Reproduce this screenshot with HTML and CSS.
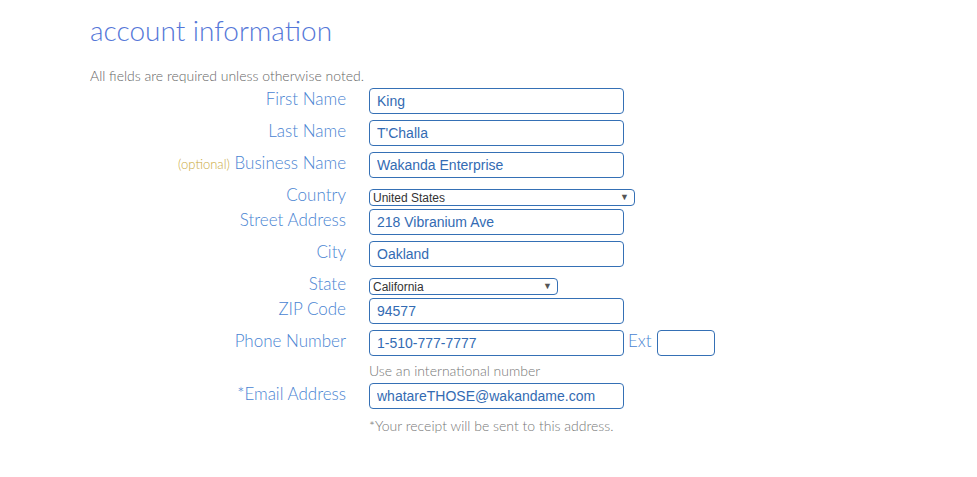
FILE: index.html
```html
<!DOCTYPE html>
<html lang="en">
<head>
<meta charset="utf-8">
<title>account information</title>
<link rel="stylesheet" href="styles.css">
</head>
<body>
<div class="page">
  <h1 class="title">account information</h1>
  <p class="note">All fields are required unless otherwise noted.</p>
  <form class="form">
    <div class="row">
      <label class="label">First Name</label>
      <div class="field"><input class="input" type="text" value="King"></div>
    </div>
    <div class="row">
      <label class="label">Last Name</label>
      <div class="field"><input class="input" type="text" value="T'Challa"></div>
    </div>
    <div class="row">
      <label class="label"><span class="optional">(optional)</span> Business Name</label>
      <div class="field"><input class="input" type="text" value="Wakanda Enterprise"></div>
    </div>
    <div class="row row-select">
      <label class="label">Country</label>
      <div class="field"><div class="select select-country"><span>United States</span><span class="arrow">&#9660;</span></div></div>
    </div>
    <div class="row">
      <label class="label">Street Address</label>
      <div class="field"><input class="input" type="text" value="218 Vibranium Ave"></div>
    </div>
    <div class="row">
      <label class="label">City</label>
      <div class="field"><input class="input" type="text" value="Oakland"></div>
    </div>
    <div class="row row-select">
      <label class="label">State</label>
      <div class="field"><div class="select select-state"><span>California</span><span class="arrow">&#9660;</span></div></div>
    </div>
    <div class="row">
      <label class="label">ZIP Code</label>
      <div class="field"><input class="input" type="text" value="94577"></div>
    </div>
    <div class="row row-phone">
      <label class="label">Phone Number</label>
      <div class="field field-phone">
        <input class="input" type="text" value="1-510-777-7777">
        <span class="ext-label">Ext</span>
        <input class="input input-ext" type="text" value="">
      </div>
    </div>
    <div class="hint-row"><span class="hint">Use an international number</span></div>
    <div class="row">
      <label class="label">*Email Address</label>
      <div class="field"><input class="input" type="text" value="whatareTHOSE@wakandame.com"></div>
    </div>
    <div class="hint-row"><span class="hint">*Your receipt will be sent to this address.</span></div>
  </form>
</div>
</body>
</html>
```

FILE: styles.css
```css
* { box-sizing: border-box; }
html, body { margin: 0; padding: 0; background: #fff; }
body { font-family: "Lato", "Open Sans", sans-serif; }

.page { padding: 12px 0 0 90px; }

.title {
  margin: 0;
  font-family: "Lato", sans-serif;
  font-weight: 300;
  font-size: 28px;
  line-height: 36px;
  color: #5577d8;
}

.note {
  margin: 19px 0 0;
  font-size: 14px;
  line-height: 18px;
  font-weight: 300;
  color: #666;
}

.form {
  display: flex;
  flex-direction: column;
  margin-top: 3px;
}

.row {
  display: grid;
  grid-template-columns: 256px auto;
  column-gap: 23px;
  height: 26px;
  margin-bottom: 6px;
}

.row-select { height: 25px; margin-bottom: 0; }
.row-phone { margin-bottom: 4px; }

.label {
  text-align: right;
  font-size: 17px;
  line-height: 21px;
  font-weight: 300;
  color: #4a84d2;
  white-space: nowrap;
}

.optional {
  font-size: 13px;
  color: #c9a93a;
}

.field { display: flex; align-items: flex-start; }

.input {
  width: 255px;
  height: 26px;
  border: 1px solid #3570b5;
  border-radius: 4px;
  padding: 0 7px;
  font-family: "Liberation Sans", Arial, sans-serif;
  font-size: 14px;
  color: #336bb3;
  background: #fff;
  outline: none;
}

.input-ext { width: 58px; }

.ext-label {
  margin: 0 5px 0 4px;
  font-size: 17px;
  line-height: 22px;
  font-weight: 300;
  color: #4a84d2;
}

.select {
  margin-top: 5px;
  height: 17px;
  border: 1px solid #3570b5;
  border-radius: 4px;
  padding: 0 5px 0 3px;
  display: flex;
  align-items: center;
  justify-content: space-between;
  font-family: "Liberation Sans", Arial, sans-serif;
  font-size: 12px;
  color: #333;
}

.select-country { width: 266px; }
.select-state { width: 189px; }

.arrow {
  font-size: 9px;
  color: #555;
  line-height: 1;
}

.hint-row {
  padding-left: 279px;
  height: 18px;
  margin-bottom: 5px;
}

.hint {
  font-size: 14px;
  line-height: 18px;
  font-weight: 300;
  color: #777;
}
```
